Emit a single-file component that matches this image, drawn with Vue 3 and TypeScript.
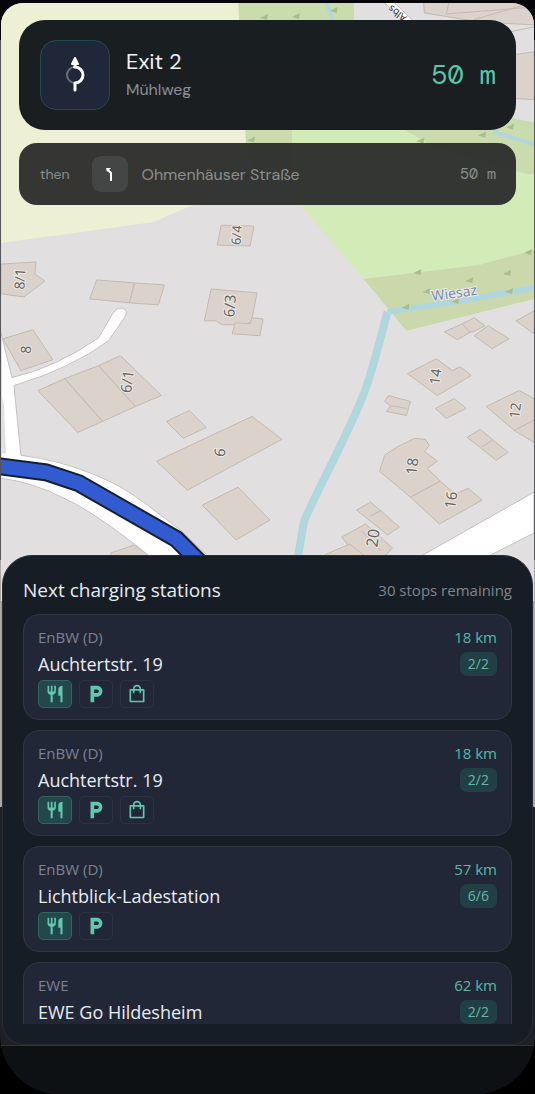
<script setup lang="ts">
type Amenity = 'food' | 'parking' | 'shopping'

interface Station {
  id: number
  operator: string
  name: string
  distance: string
  free: string
  amenities: Amenity[]
}

interface MapLabel {
  text: string
  x: number
  y: number
  angle: number
  size: number
}

const amenityNames: Record<Amenity, string> = {
  food: 'Restaurant',
  parking: 'Parking',
  shopping: 'Shopping',
}

const stations: Station[] = [
  { id: 1, operator: 'EnBW (D)', name: 'Auchtertstr. 19', distance: '18 km', free: '2/2', amenities: ['food', 'parking', 'shopping'] },
  { id: 2, operator: 'EnBW (D)', name: 'Auchtertstr. 19', distance: '18 km', free: '2/2', amenities: ['food', 'parking', 'shopping'] },
  { id: 3, operator: 'EnBW (D)', name: 'Lichtblick-Ladestation', distance: '57 km', free: '6/6', amenities: ['food', 'parking'] },
  { id: 4, operator: 'EWE', name: 'EWE Go Hildesheim', distance: '62 km', free: '2/2', amenities: ['food'] },
]

const buildings: string[] = [
  '221,221 254,222 250,242 217,241',
  '0,260 35,258 34,270 44,277 23,293 0,290',
  '96,276 134,279 129,299 89,295',
  '134,279 164,281 158,301 129,299',
  '211,285 257,289 251,319 235,321 222,321 216,317 204,317',
  '235,319 250,320 252,314 263,315 260,332 232,330',
  '2,335 32,326 52,356 20,367',
  '37,387 64,375 102,418 77,429',
  '64,375 98,362 135,403 102,418',
  '98,362 120,352 161,392 135,403',
  '166,418 189,407 206,424 183,435',
  '156,458 252,413 282,436 187,487',
  '202,502 238,484 270,517 236,537',
  '110,550 134,542 150,554 112,555',
  '445,328 463,320 472,328 458,336',
  '463,320 475,314 486,322 474,328 470,328',
  '475,332 489,322 510,335 493,345',
  '517,317 535,307 535,330',
  '408,370 437,355 453,367 461,363 472,372 438,392',
  '389,392 411,398 407,412 387,408 391,402 385,398',
  '436,405 455,395 467,405 447,415',
  '487,403 520,387 535,395 535,417 515,427',
  '515,427 535,417 535,439',
  '468,434 481,426 509,449 497,457',
  '385,452 397,444 415,435 426,436 430,442 425,448 438,458 428,465 441,478 411,494 380,468',
  '411,494 441,478 456,491 469,485 483,497 440,521',
  '357,507 371,499 400,524 388,532',
  '342,534 366,521 393,545 382,557 360,557',
  '325,552 350,541 370,557 325,557',
  '424,-4 475,-6 520,-6 535,6 535,20 480,17 425,8',
  '500,52 535,47 535,95 500,93',
]

const walls: string[] = ['391,402 407,405', '371,513 382,507', '362,528 382,548', '482,444 493,437', '450,-4 447,9 535,2', '474,15 535,-3', '500,29 535,22']

const labels: MapLabel[] = [
  { text: '6/4', x: 236, y: 231, angle: -86, size: 13 },
  { text: '8/1', x: 19, y: 275, angle: -86, size: 14 },
  { text: '6/3', x: 230, y: 302, angle: -86, size: 15 },
  { text: '8', x: 25, y: 346, angle: -86, size: 14 },
  { text: '6/1', x: 127, y: 378, angle: -82, size: 15 },
  { text: '6', x: 220, y: 449, angle: -80, size: 15 },
  { text: '14', x: 436, y: 373, angle: -82, size: 14 },
  { text: '12', x: 516, y: 407, angle: -82, size: 14 },
  { text: '18', x: 413, y: 463, angle: -84, size: 15 },
  { text: '16', x: 452, y: 497, angle: -82, size: 15 },
  { text: '20', x: 374, y: 535, angle: -82, size: 16 },
]

const marshMarks: number[][] = [
  [419, 269], [471, 277], [428, 288], [509, 270], [530, 249], [407, 304], [457, 298], [511, 288],
  [265, 13], [297, 12], [335, 6], [252, 136], [422, 137], [484, 131], [512, 123],
]
</script>

<template>
  <main class="phone">
    <section class="stage" aria-label="Navigation">
      <svg class="map" viewBox="0 -2 535 600" role="img" aria-label="Map">
        <rect y="-4" width="535" height="606" fill="#e1dfe0" />
        <polygon points="0,-4 238,-4 252,128 215,190 190,202 152,218 0,239" fill="#edf0d5" />
        <polygon points="238,-4 354,-4 356,60 400,125 450,100 535,118 535,170 300,170 252,160 246,141" fill="#cadbae" />
        <polygon points="292,120 405,125 430,140 535,172 535,250 480,261 364,275 303,204 292,170" fill="#d3ebb6" />
        <polygon points="364,275 480,261 535,246 535,295 407,327" fill="#cad8ab" />
        <g fill="none" stroke="#b0d6de" stroke-linejoin="round">
          <path d="M327 -4l7 24" stroke-width="4" />
          <path d="M494 127l41 13" stroke-width="4" />
          <path d="M535 284L455 298 388 308" stroke-width="6" />
          <path d="M388 308C380 337 374 363 366 385C352 425 312 497 304 519L297 560" stroke-width="8" />
        </g>
        <g fill="#a9bd91">
          <path v-for="(m, i) in marshMarks" :key="i" :d="`M${m[0] - 5} ${m[1]}l8-4-1 6z`" />
        </g>
        <g fill="#dad2cb" stroke="#c3bab2" stroke-width="1">
          <polygon v-for="(b, i) in buildings" :key="i" :points="b" />
        </g>
        <g fill="none" stroke="#c3bab2">
          <polyline v-for="(w, i) in walls" :key="i" :points="w" />
        </g>
        <g fill="#fff" stroke="#c4c1c2">
          <path d="M0 329L11 374Q55 364 98 334L112 310Q118 301 125 306Q128 309 121 318L108 337Q70 365 13 382L20 452Q60 457 95 472Q120 482 143 499L180 527 214 559H156Q98 511 63 495Q32 479 0 475Z" />
          <path d="M422 553L535 489V530L482 557Z" />
          <path d="M382 -5L406 17 417 19 392 -5Z" />
        </g>
        <polygon points="0,387 3,402 5,450 0,450" fill="#e1dfe0" />
        <g fill="none" stroke-linejoin="miter">
          <path d="M-2 463L45 469 78 480 176 536 201 561" stroke="#15202f" stroke-width="18" />
          <path d="M-2 463L45 469 78 480 176 536 201 561" stroke="#325bd0" stroke-width="14" />
        </g>
        <g class="map-text">
          <text
            v-for="l in labels"
            :key="l.text"
            :transform="`translate(${l.x} ${l.y}) rotate(${l.angle})`"
            :font-size="l.size"
            dy="5"
          >{{ l.text }}</text>
          <text class="street" transform="translate(398 8) rotate(218)" font-size="10" dy="3">Albs</text>
          <text class="water" transform="translate(455 290) rotate(-8)" font-size="14" dy="4">Wiesaz</text>
        </g>
      </svg>

      <div class="guidance">
        <article class="turn">
          <span class="turn-icon">
            <svg width="40" height="40" viewBox="0 0 40 40" fill="none" aria-hidden="true">
              <path d="M20 12A8 8 0 0 0 20 28" stroke="#6a6f7d" stroke-width="2" />
              <path d="M20 12A8 8 0 0 1 20 28V35" stroke="#fff" stroke-width="3" stroke-linecap="round" stroke-linejoin="round" />
              <path d="M20 3L23 9H17Z" fill="#fff" stroke="#fff" stroke-width="2" stroke-linejoin="round" />
              <path d="M20 9V13" stroke="#fff" stroke-width="3" />
            </svg>
          </span>
          <div class="turn-text">
            <h1>Exit 2</h1>
            <p>Mühlweg</p>
          </div>
          <strong class="turn-distance">50 m</strong>
        </article>
        <article class="next">
          <span class="then">then</span>
          <span class="next-icon">
            <svg width="20" height="20" viewBox="0 0 20 20" fill="none" aria-hidden="true">
              <path d="M11 17V9L8 6" stroke="#fff" stroke-width="2" />
              <path d="M6 4H11L7 8Z" fill="#fff" />
            </svg>
          </span>
          <span class="next-street">Ohmenhäuser Straße</span>
          <span class="next-distance">50 m</span>
        </article>
      </div>
    </section>

    <section class="sheet" aria-labelledby="stations-title">
      <header class="sheet-head">
        <h2 id="stations-title">Next charging stations</h2>
        <span>30 stops remaining</span>
      </header>
      <ul class="stations">
        <li v-for="s in stations" :key="s.id" class="station">
          <div class="station-info">
            <span class="operator">{{ s.operator }}</span>
            <h3>{{ s.name }}</h3>
            <div class="amenities">
              <span
                v-for="a in s.amenities"
                :key="a"
                class="amenity"
                :class="{ active: a === 'food' }"
                role="img"
                :aria-label="amenityNames[a]"
              >
                <svg v-if="a === 'food'" width="20" height="20" viewBox="0 0 24 24" fill="currentColor">
                  <path d="M11 9H9V2H7v7H5V2H3v7c0 2.120 1.660 3.840 3.750 3.970V22h2.500v-9.030C11.340 12.840 13 11.120 13 9V2h-2zM16 6v8h2.500v8H21V2c-2.760 0-5 2.240-5 4z" />
                </svg>
                <svg v-else-if="a === 'parking'" width="22" height="22" viewBox="0 0 24 24" fill="currentColor">
                  <path d="M13 3H6v18h4v-6h3c3.310 0 6-2.690 6-6s-2.690-6-6-6zm.2 8H10V7h3.200a2 2 0 0 1 0 4z" />
                </svg>
                <svg v-else width="20" height="20" viewBox="0 0 24 24" fill="none" stroke="currentColor" stroke-width="2" stroke-linejoin="round">
                  <path d="M4 7H20V21H4Z" />
                  <path d="M8 11V6a4 4 0 0 1 8 0v5" />
                </svg>
              </span>
            </div>
          </div>
          <div class="station-meta">
            <span class="distance">{{ s.distance }}</span>
            <span class="free">{{ s.free }}</span>
          </div>
        </li>
      </ul>
    </section>
    <footer class="dock"></footer>
  </main>
</template>

<style>
body {
  background: #000;
}
</style>

<style scoped>
h1,
h2,
h3,
p,
ul {
  margin: 0;
  padding: 0;
  font-weight: 400;
}

.phone {
  box-sizing: border-box;
  min-height: 100vh;
  display: flex;
  flex-direction: column;
  padding: 3px 1px 0;
  overflow: hidden;
  border-radius: 0 0 60px 60px;
  background: linear-gradient(#06060a 0 40px, #55555a 40px 560px, #aaa6a3 560px 807px, #1d2126 807px);
  font-family: "Open Sans", "Noto Sans", sans-serif;
}

.stage {
  position: relative;
  border-radius: 22px 22px 0 0;
  overflow: hidden;
}

.map {
  display: block;
  width: 100%;
  height: auto;
}

.map-text {
  fill: #66615e;
  font-family: "Noto Sans", sans-serif;
  text-anchor: middle;
  paint-order: stroke;
  stroke: #eeecea;
  stroke-width: 2px;
}

.water {
  fill: #7789b4;
}

.street {
  fill: #333;
  stroke: none;
}

.guidance {
  position: absolute;
  inset: 17px 18px auto;
  display: grid;
  gap: 13px;
  font-family: "DM Sans", Lato, sans-serif;
}

.turn {
  display: flex;
  align-items: center;
  gap: 16px;
  padding: 20px 20px 20px 21px;
  border-radius: 26px;
  background: linear-gradient(#191e22, #1b1e20);
}

.turn-icon {
  box-sizing: border-box;
  width: 70px;
  height: 70px;
  display: grid;
  place-items: center;
  border: 1px solid #244a50;
  border-radius: 16px;
  background: #1f2738;
}

.turn-text {
  flex: 1;
}

.turn-text h1 {
  color: #f0f2f5;
  font-size: 22px;
  line-height: 30px;
}

.turn-text p {
  color: #8b8f97;
  font-size: 16px;
  line-height: 26px;
}

.turn-distance {
  color: #5bc5a7;
  font: 400 27px/36px "DM Mono", "DejaVu Sans Mono", monospace;
}

.next {
  box-sizing: border-box;
  min-height: 62px;
  display: flex;
  align-items: center;
  padding: 12px 20px 12px 21px;
  border-radius: 18px;
  background: rgba(39, 40, 40, 0.93);
  color: #8b8e8e;
}

.then {
  font-size: 14px;
}

.next-icon {
  width: 36px;
  height: 36px;
  display: grid;
  place-items: center;
  margin: 0 14px 0 22px;
  border-radius: 9px;
  background: #444645;
}

.next-street {
  flex: 1;
  font-size: 16px;
}

.next-distance {
  font: 15px/20px "DM Mono", "DejaVu Sans Mono", monospace;
}

.sheet {
  position: relative;
  margin: -46px 1px 0;
  padding: 20px;
  border: 1px solid #292e34;
  border-radius: 30px 30px 22px 22px;
  background: #171d24;
}

.sheet-head {
  display: flex;
  align-items: center;
  justify-content: space-between;
  margin-bottom: 10px;
  color: #80868f;
  font-size: 15px;
  line-height: 28px;
}

.sheet-head h2 {
  color: #e9ecf2;
  font-size: 19px;
}

.stations {
  display: grid;
  gap: 10px;
  max-height: 410px;
  overflow: hidden;
  list-style: none;
}

.station {
  display: flex;
  justify-content: space-between;
  padding: 11px 14px;
  border: 1px solid #2f3642;
  border-radius: 16px;
  background: #212737;
}

.station-info {
  display: grid;
}

.operator {
  color: #7c8391;
  font-size: 15px;
  line-height: 22px;
}

.station h3 {
  color: #e9ecf2;
  font-size: 18px;
  line-height: 32px;
}

.amenities {
  display: flex;
  gap: 7px;
}

.amenity {
  box-sizing: border-box;
  width: 34px;
  height: 28px;
  display: grid;
  place-items: center;
  border: 1px solid #2c3241;
  border-radius: 5px;
  color: #61c8ae;
}

.amenity.active {
  border-color: #35635f;
  background: #22484c;
}

.station-meta {
  display: flex;
  flex-direction: column;
  align-items: flex-end;
  gap: 4px;
}

.distance {
  color: #5cb8a5;
  font-size: 15px;
  line-height: 22px;
}

.free {
  padding: 0 8px;
  border-radius: 7px;
  background: #214045;
  color: #69b6a6;
  font-size: 14px;
  line-height: 24px;
}

.dock {
  flex: 1;
  min-height: 48px;
  border-top: 1px solid #2e3337;
  border-radius: 0 0 60px 60px;
  background: #0d1114;
}
</style>
